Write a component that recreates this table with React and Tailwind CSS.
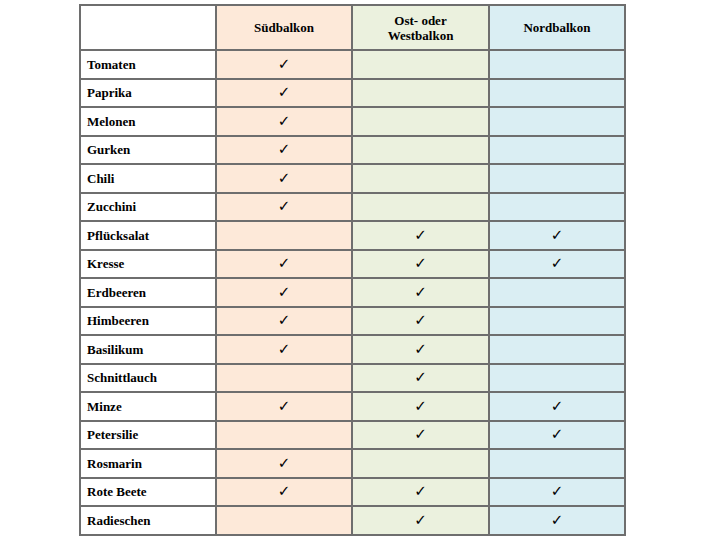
import React from 'react';

const rows = [
    ['Tomaten', 1, 0, 0],
    ['Paprika', 1, 0, 0],
    ['Melonen', 1, 0, 0],
    ['Gurken', 1, 0, 0],
    ['Chili', 1, 0, 0],
    ['Zucchini', 1, 0, 0],
    ['Pflücksalat', 0, 1, 1],
    ['Kresse', 1, 1, 1],
    ['Erdbeeren', 1, 1, 0],
    ['Himbeeren', 1, 1, 0],
    ['Basilikum', 1, 1, 0],
    ['Schnittlauch', 0, 1, 0],
    ['Minze', 1, 1, 1],
    ['Petersilie', 0, 1, 1],
    ['Rosmarin', 1, 0, 0],
    ['Rote Beete', 1, 1, 1],
    ['Radieschen', 0, 1, 1],
];

const colBg = ['bg-[#fde9d9]', 'bg-[#ebf1de]', 'bg-[#daeef3]'];

function Check({ on }) {
    if (!on) return null;
    return <span className="font-[family-name:DejaVu_Sans] font-bold text-[15px]">✓</span>;
}

export default function App() {
    return (
        <div className="w-[703px] h-[541px] bg-white pt-[4px] pl-[79px]">
            <table className="table-fixed border-collapse w-[545px] font-[family-name:Liberation_Serif] font-bold text-[13px] text-black">
                <colgroup>
                    <col className="w-[136px]" />
                    <col className="w-[136px]" />
                    <col className="w-[137px]" />
                    <col className="w-[136px]" />
                </colgroup>
                <thead>
                    <tr className="h-[45px]">
                        <th className="border-2 border-[#6e6e6e] bg-white"></th>
                        <th className="border-2 border-[#6e6e6e] bg-[#fde9d9] leading-[15px]">Südbalkon</th>
                        <th className="border-2 border-[#6e6e6e] bg-[#ebf1de] leading-[15px]">
                            Ost- oder
                            <br />
                            Westbalkon
                        </th>
                        <th className="border-2 border-[#6e6e6e] bg-[#daeef3] leading-[15px]">Nordbalkon</th>
                    </tr>
                </thead>
                <tbody>
                    {rows.map(([name, s, o, n]) => (
                        <tr key={name} className="h-[28.5px]">
                            <td className="border-2 border-[#6e6e6e] bg-white pl-[6px] p-0 leading-none">{name}</td>
                            {[s, o, n].map((v, i) => (
                                <td key={i} className={`border-2 border-[#6e6e6e] ${colBg[i]} text-center p-0 leading-none`}>
                                    <Check on={v} />
                                </td>
                            ))}
                        </tr>
                    ))}
                </tbody>
            </table>
        </div>
    );
}
